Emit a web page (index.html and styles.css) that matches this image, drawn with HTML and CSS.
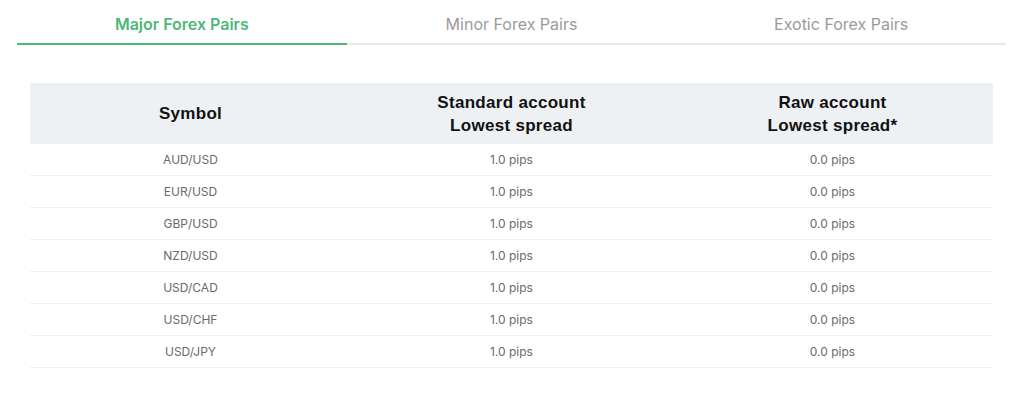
FILE: index.html
```html
<!DOCTYPE html>
<html lang="en">
<head>
    <meta charset="UTF-8">
    <title>Forex Pairs Spreads</title>
    <link rel="stylesheet" href="styles.css">
</head>
<body>
    <div class="tabs">
        <div class="tab active">Major Forex Pairs</div>
        <div class="tab">Minor Forex Pairs</div>
        <div class="tab">Exotic Forex Pairs</div>
    </div>

    <table class="spreads">
        <thead>
            <tr>
                <th>Symbol</th>
                <th>Standard account<br>Lowest spread</th>
                <th>Raw account<br>Lowest spread*</th>
            </tr>
        </thead>
        <tbody>
            <tr><td>AUD/USD</td><td>1.0 pips</td><td>0.0 pips</td></tr>
            <tr><td>EUR/USD</td><td>1.0 pips</td><td>0.0 pips</td></tr>
            <tr><td>GBP/USD</td><td>1.0 pips</td><td>0.0 pips</td></tr>
            <tr><td>NZD/USD</td><td>1.0 pips</td><td>0.0 pips</td></tr>
            <tr><td>USD/CAD</td><td>1.0 pips</td><td>0.0 pips</td></tr>
            <tr><td>USD/CHF</td><td>1.0 pips</td><td>0.0 pips</td></tr>
            <tr><td>USD/JPY</td><td>1.0 pips</td><td>0.0 pips</td></tr>
        </tbody>
    </table>
</body>
</html>
```

FILE: styles.css
```css
body {
    margin: 0;
    background-color: #fff;
    font-family: Inter, "Open Sans", sans-serif;
    color: #555;
}
.tabs {
    display: flex;
    margin-left: 17px;
    width: 989px;
}
.tab {
    flex: 1;
    text-align: center;
    font-size: 16px;
    line-height: 20px;
    padding: 14px 0 9px;
    color: #9a9a9a;
    border-bottom: 2px solid #e9e9e9;
}
.tab.active {
    color: #4cb87a;
    font-weight: 600;
    border-bottom-color: #4cb87a;
}
.spreads {
    margin: 38px 0 0 30px;
    width: 963px;
    border-collapse: collapse;
    table-layout: fixed;
}
.spreads th {
    background-color: #eef1f4;
    font-family: "Liberation Sans", Arial, sans-serif;
    font-weight: bold;
    font-size: 17px;
    line-height: 23px;
    letter-spacing: 0.3px;
    color: #111;
    height: 61px;
    padding: 0;
}
.spreads td {
    text-align: center;
    font-size: 12px;
    color: #6a6a6a;
    height: 31px;
    padding: 0;
    border-bottom: 1px solid #eef0f2;
}
```
